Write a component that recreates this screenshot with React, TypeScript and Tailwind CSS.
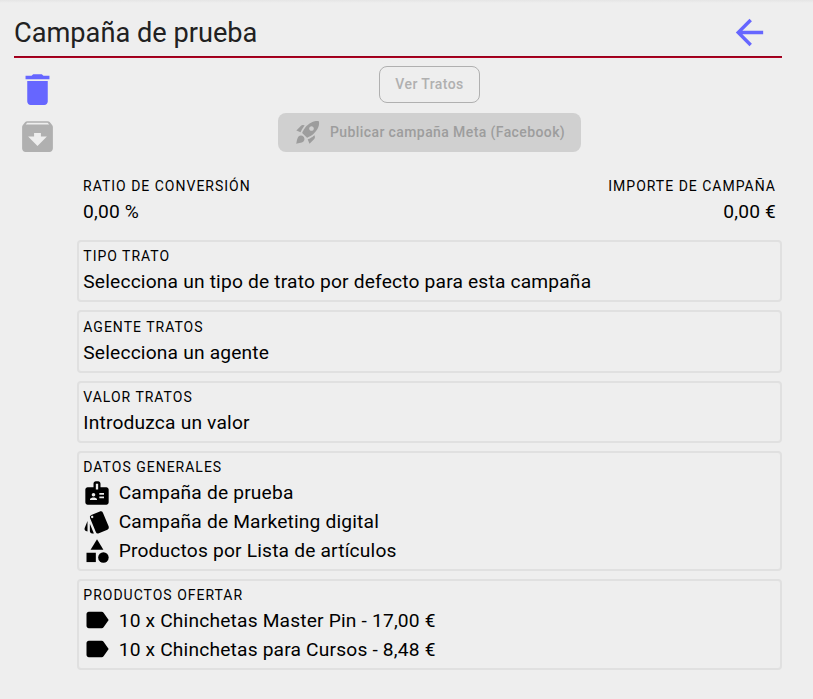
import type { ReactNode } from "react";
import type { IconType } from "react-icons";
import {
  MdArchive,
  MdArrowBack,
  MdBadge,
  MdCategory,
  MdDelete,
  MdLabel,
  MdStyle,
} from "react-icons/md";

function Label({ children }: { children: ReactNode }) {
  return <div className="text-[14px] leading-[20px] tracking-[1px] uppercase">{children}</div>;
}

function Panel({ title, className, children }: { title: string; className: string; children: ReactNode }) {
  return (
    <section className={`rounded-[4px] border-2 border-[#e0e0e0] px-[4.3px] ${className}`}>
      <Label>{title}</Label>
      {children}
    </section>
  );
}

function Value({ children }: { children: ReactNode }) {
  return <div className="mt-px text-[19.2px] leading-[29px] tracking-[0.18px]">{children}</div>;
}

function Item({ icon: Icon, iconClass, children }: { icon: IconType; iconClass?: string; children: ReactNode }) {
  return (
    <li className="flex h-[29px] items-start gap-[7.4px] text-[19.2px] leading-[29px] tracking-[0.18px]">
      <Icon className={`size-[28px] ${iconClass ?? ""}`} />
      <span>{children}</span>
    </li>
  );
}

function RocketIcon({ className }: { className: string }) {
  return (
    <svg viewBox="0 0 24 24" fill="currentColor" className={className}>
      <path d="M9.19 6.35c-2.04 2.29-3.44 5.58-3.57 5.89L2 10.69l4.05-4.05c.47-.47 1.15-.68 1.81-.55l1.33.26zM11.17 17s3.74-1.55 5.89-3.7c5.4-5.4 4.5-9.62 4.21-10.57-.95-.3-5.17-1.19-10.57 4.21C8.55 9.09 7 12.83 7 12.83L11.17 17zm6.48-2.19c-2.29 2.04-5.58 3.44-5.89 3.57L13.31 22l4.05-4.05c.47-.47.68-1.15.55-1.81l-.26-1.33zM9 18c0 .83-.34 1.58-.88 2.12C6.94 21.3 2 22 2 22s.7-4.94 1.88-6.12A2.996 2.996 0 0 1 9 18zm4-9c0-1.1.9-2 2-2s2 .9 2 2-.9 2-2 2-2-.9-2-2z" />
    </svg>
  );
}

export default function App() {
  return (
    <div className="h-[699px] w-[813px] overflow-hidden bg-[#eeeeee] font-[Roboto,sans-serif] text-black">
      <div className="h-[3px] bg-linear-to-b from-[#e5e5e5] to-[#eeeeee]" />
      <header className="ml-[14px] flex h-[53px] w-[768px] items-center justify-between pr-[12px]">
        <h1 className="pt-[7px] text-[27.2px] leading-[36px] text-[#212121]">Campaña de prueba</h1>
        <button className="pt-[6px] text-[#6666ff]">
          <MdArrowBack className="size-[41px]" />
        </button>
      </header>
      <div className="ml-[14px] h-[2px] w-[768px] bg-linear-to-b from-[#8a0018] to-[#bd0024]" />
      <div className="ml-[14px] flex w-[768px]">
        <aside className="flex w-[63px] flex-col gap-[6px] pt-[11px] pl-[3px]">
          <MdDelete className="size-[41px] text-[#6666ff]" />
          <MdArchive className="size-[41px] text-[#b0b0b0]" />
        </aside>
        <main className="flex w-[705px] flex-col">
          <div className="flex flex-col items-center pt-[8px]">
            <button className="h-[37px] w-[101px] rounded-[8px] border border-[#b0b0b0] text-[14px] font-medium tracking-[0.4px] text-[#b0b0b0]">
              Ver Tratos
            </button>
            <button className="mt-[10px] flex h-[39px] w-[303px] items-center gap-[8px] rounded-[8px] bg-[#d0d0d0] pl-[16px] text-[14px] font-medium tracking-[0.4px] text-[#9d9d9d]">
              <RocketIcon className="mb-px size-[28px]" />
              Publicar campaña Meta (Facebook)
            </button>
          </div>
          <div className="flex justify-between px-[6px] pt-[24px]">
            <div>
              <Label>Ratio de conversión</Label>
              <Value>0,00 %</Value>
            </div>
            <div className="text-right">
              <Label>Importe de campaña</Label>
              <Value>0,00 €</Value>
            </div>
          </div>
          <Panel title="Tipo trato" className="mt-[14px] h-[62px] pt-[4px]">
            <Value>Selecciona un tipo de trato por defecto para esta campaña</Value>
          </Panel>
          <Panel title="Agente tratos" className="mt-[8px] h-[63px] pt-[5px]">
            <Value>Selecciona un agente</Value>
          </Panel>
          <Panel title="Valor tratos" className="mt-[8px] h-[62px] pt-[4px]">
            <Value>Introduzca un valor</Value>
          </Panel>
          <Panel title="Datos generales" className="mt-[8px] h-[120px] pt-[4px]">
            <ul className="mt-px">
              <Item icon={MdBadge} iconClass="mt-px">Campaña de prueba</Item>
              <Item icon={MdStyle} iconClass="mt-px">Campaña de Marketing digital</Item>
              <Item icon={MdCategory} iconClass="mt-px">Productos por Lista de artículos</Item>
            </ul>
          </Panel>
          <Panel title="Productos ofertar" className="mt-[8px] h-[91px] pt-[4px]">
            <ul className="mt-px">
              <Item icon={MdLabel}>10 x Chinchetas Master Pin - 17,00 €</Item>
              <Item icon={MdLabel}>10 x Chinchetas para Cursos - 8,48 €</Item>
            </ul>
          </Panel>
        </main>
      </div>
    </div>
  );
}
